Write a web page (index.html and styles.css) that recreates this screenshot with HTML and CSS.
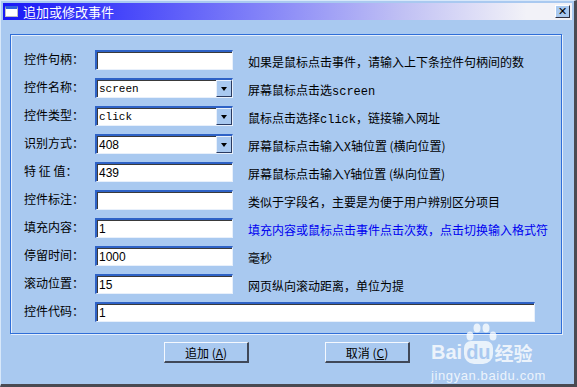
FILE: index.html
```html
<!DOCTYPE html>
<html lang="zh-CN">

<head>
    <meta charset="UTF-8">
    <title>追加或修改事件</title>
    <link rel="stylesheet" href="styles.css">
</head>

<body>
    <div class="window">
        <div class="titlebar">
            <span class="app-icon"></span>
            <span class="title">追加或修改事件</span>
            <span class="close-btn">✕</span>
        </div>

        <div class="group">
            <div class="row">
                <label>控件句柄：</label>
                <div class="field"></div>
                <span class="desc">如果是鼠标点击事件，请输入上下条控件句柄间的数</span>
            </div>
            <div class="row">
                <label>控件名称：</label>
                <div class="field combo"><span class="mono">screen</span><span class="drop"></span></div>
                <span class="desc">屏幕鼠标点击选<span class="mono">screen</span></span>
            </div>
            <div class="row">
                <label>控件类型：</label>
                <div class="field combo"><span class="mono">click</span><span class="drop"></span></div>
                <span class="desc">鼠标点击选择<span class="mono">click</span>，链接输入网址</span>
            </div>
            <div class="row">
                <label>识别方式：</label>
                <div class="field combo"><span>408</span><span class="drop"></span></div>
                <span class="desc">屏幕鼠标点击输入X轴位置 (横向位置)</span>
            </div>
            <div class="row">
                <label>特 征 值：</label>
                <div class="field">439</div>
                <span class="desc">屏幕鼠标点击输入Y轴位置 (纵向位置)</span>
            </div>
            <div class="row">
                <label>控件标注：</label>
                <div class="field"></div>
                <span class="desc">类似于字段名，主要是为便于用户辨别区分项目</span>
            </div>
            <div class="row">
                <label>填充内容：</label>
                <div class="field">1</div>
                <span class="desc link">填充内容或鼠标点击事件点击次数，点击切换输入格式符</span>
            </div>
            <div class="row">
                <label>停留时间：</label>
                <div class="field">1000</div>
                <span class="desc">毫秒</span>
            </div>
            <div class="row">
                <label>滚动位置：</label>
                <div class="field">15</div>
                <span class="desc">网页纵向滚动距离，单位为提</span>
            </div>
            <div class="row">
                <label>控件代码：</label>
                <div class="field wide">1</div>
            </div>
        </div>

        <div class="actions">
            <button class="button">追加 (<u>A</u>)</button>
            <button class="button">取消 (<u>C</u>)</button>
        </div>

        <!-- 水印 -->
        <div class="watermark">
            <svg class="paw" width="34" height="20" viewBox="0 0 34 20">
                <ellipse cx="5" cy="13" rx="3.5" ry="4.5" />
                <ellipse cx="12" cy="5" rx="3.5" ry="4.5" />
                <ellipse cx="21" cy="5" rx="3.5" ry="4.5" />
                <ellipse cx="28" cy="13" rx="3.5" ry="4.5" />
            </svg>
            <div class="brand">
                <span>Bai</span><span class="du">du</span><span class="cn">经验</span>
            </div>
            <div class="site">jingyan.baidu.com</div>
        </div>
    </div>
</body>

</html>
```

FILE: styles.css
```css
body {
    margin: 0;
    padding: 0;
    font-family: "Liberation Sans", "Noto Sans CJK SC", sans-serif;
    font-size: 12px;
    color: #000;
}

.window {
    position: relative;
    width: 577px;
    height: 387px;
    box-sizing: border-box;
    padding: 3px 0 0 3px;
    background-color: #a9c9f0;
    border-top: 1px solid #d8e8fa;
    border-left: 1px solid #d8e8fa;
    border-right: 3px solid #4a4a52;
    border-bottom: 3px solid #4a4a52;
    overflow: hidden;
}

/* 标题栏 */
.titlebar {
    display: flex;
    align-items: center;
    width: 569px;
    height: 17px;
    margin-left: -1px;
    margin-top: -1px;
    background: linear-gradient(to right, #1818f6 0%, #4444fa 20%, #8282f8 45%, #c0c0f4 70%, #f2f2f8 92%);
}

.app-icon {
    width: 13px;
    height: 11px;
    margin-left: 2px;
    box-sizing: border-box;
    background: #fff;
    border: 1px solid #c0c0c0;
    border-top: 3px solid #3060e0;
}

.title {
    margin-left: 5px;
    color: #fff;
    font-size: 13px;
    font-family: "Noto Sans CJK SC", sans-serif;
    line-height: 17px;
}

.close-btn {
    margin-left: auto;
    margin-right: 2px;
    width: 15px;
    height: 13px;
    box-sizing: border-box;
    background: #a9c9f0;
    border-top: 1px solid #fff;
    border-left: 1px solid #fff;
    border-right: 1px solid #303040;
    border-bottom: 1px solid #303040;
    font-size: 11px;
    font-weight: bold;
    line-height: 11px;
    text-align: center;
    font-family: "DejaVu Sans", sans-serif;
}

/* 分组框 */
.group {
    width: 552px;
    box-sizing: border-box;
    margin: 14px 0 0 6px;
    padding: 15px 0 11px 13px;
    border: 1px solid #2f6ed8;
    box-shadow: 1px 1px 0 #e4eefc, inset 1px 1px 0 #e4eefc;
}

.row {
    display: flex;
    align-items: center;
    height: 20px;
    margin-bottom: 8px;
}

.row:last-child {
    margin-bottom: 0;
}

.row label {
    width: 71px;
    padding-bottom: 4px;
    font-family: "Noto Sans CJK SC", sans-serif;
    font-size: 12px;
    white-space: pre;
}

.field {
    position: relative;
    display: flex;
    align-items: center;
    width: 138px;
    height: 20px;
    box-sizing: border-box;
    padding-left: 2px;
    background: #fff;
    border-top: 2px solid #2e62c6;
    border-left: 2px solid #2e62c6;
    border-right: 1px solid #e8f0fb;
    border-bottom: 1px solid #e8f0fb;
    box-shadow: inset 1px 1px 0 #3a3a3a;
    font-size: 12px;
}

.field.wide {
    width: 440px;
}

.mono {
    font-family: "Liberation Mono", monospace;
    font-size: 11px;
}

.drop {
    position: absolute;
    right: 0;
    top: 0;
    width: 16px;
    height: 17px;
    box-sizing: border-box;
    background: #a9c9f0;
    border-top: 1px solid #e8f0fb;
    border-left: 1px solid #e8f0fb;
    border-right: 1px solid #2a3a60;
    border-bottom: 1px solid #2a3a60;
}

.drop::after {
    content: "";
    position: absolute;
    left: 4px;
    top: 6px;
    border-left: 3.5px solid transparent;
    border-right: 3.5px solid transparent;
    border-top: 4px solid #000;
}

.desc {
    margin-left: 15px;
    padding-top: 3px;
    font-family: "Noto Sans CJK SC", sans-serif;
    font-size: 12px;
    white-space: nowrap;
}

.desc .mono {
    font-size: 12px;
}

.desc.link {
    color: #0000f0;
}

/* 底部按钮 */
.actions {
    display: flex;
    gap: 76px;
    margin-top: 8px;
    padding-left: 160px;
}

.button {
    width: 85px;
    height: 21px;
    padding: 0;
    box-sizing: border-box;
    background: #a9c9f0;
    border-top: 1px solid #f4f8fe;
    border-left: 1px solid #f4f8fe;
    border-right: 2px solid #404858;
    border-bottom: 2px solid #404858;
    font-family: "Noto Sans CJK SC", sans-serif;
    font-size: 12px;
    color: #000;
    line-height: 17px;
}

/* 水印 */
.watermark {
    position: absolute;
    right: 28px;
    bottom: 1px;
    white-space: nowrap;
    color: rgba(255, 255, 255, 0.8);
}

.paw {
    display: block;
    margin-left: 34px;
    fill: rgba(255, 255, 255, 0.75);
}

.brand {
    display: flex;
    align-items: center;
    gap: 2px;
    margin-top: -2px;
    font-family: "Liberation Sans", "Noto Sans CJK SC", sans-serif;
    font-size: 20px;
    font-weight: bold;
    line-height: 23px;
}

.brand .du {
    padding: 0 2px;
    border-radius: 7px 7px 10px 10px;
    background: rgba(255, 255, 255, 0.75);
    color: #a9c9f0;
}

.brand .cn {
    font-family: "Noto Sans CJK SC", sans-serif;
    font-size: 19px;
}

.site {
    margin-top: 4px;
    font-size: 13px;
    letter-spacing: 0.6px;
    line-height: 15px;
}
```
